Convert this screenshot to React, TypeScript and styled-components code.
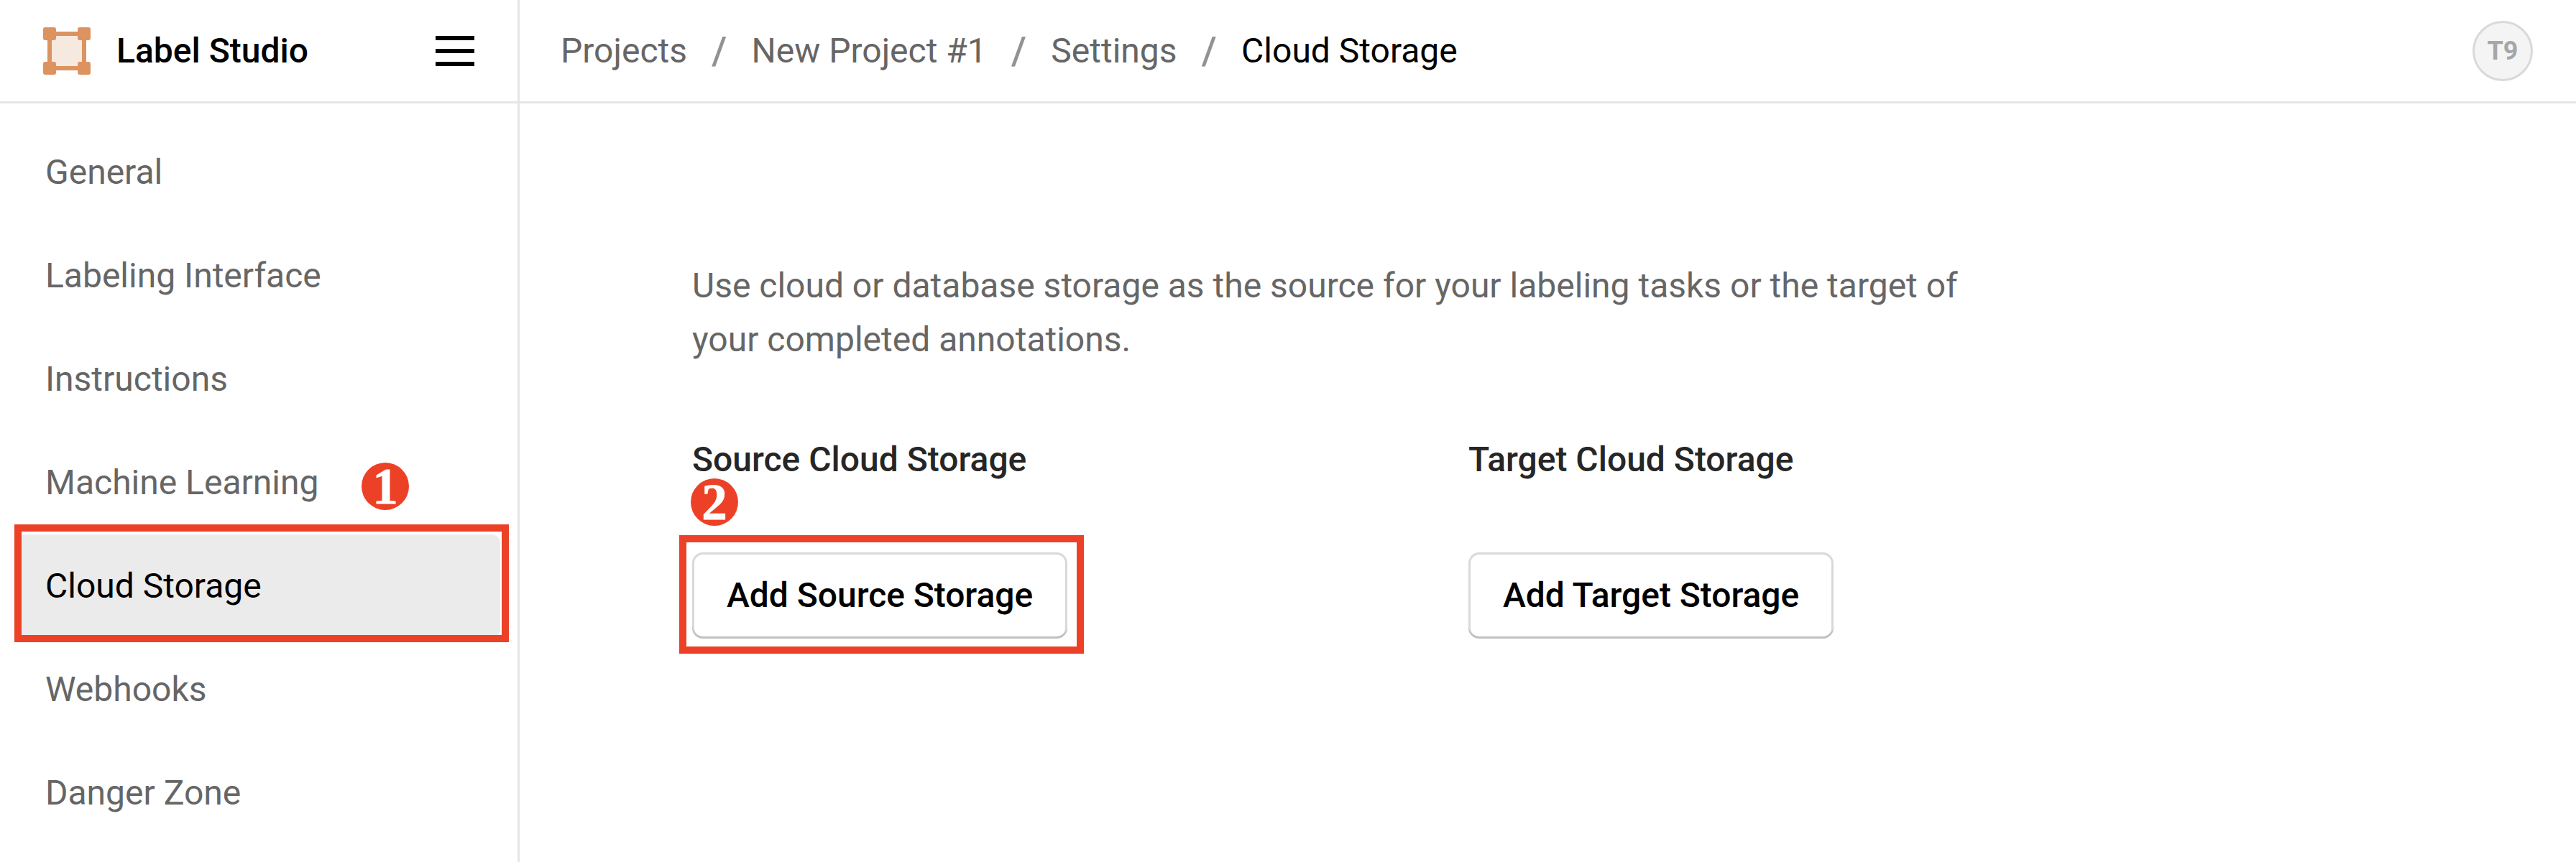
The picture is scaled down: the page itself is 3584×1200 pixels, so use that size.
import React, { Fragment } from "react";
import styled, { createGlobalStyle } from "styled-components";

const GlobalStyle = createGlobalStyle`
  * { box-sizing: border-box; }
  body { margin: 0; background: #fff; }
`;

const Page = styled.div`
  display: flex;
  flex-direction: column;
  width: 3584px;
  height: 1200px;
  overflow: hidden;
  font-family: Roboto, "Liberation Sans", sans-serif;
  font-size: 48px;
  color: #666;
  background: #fff;
`;

const Header = styled.header`
  display: flex;
  flex: none;
  height: 144px;
  border-bottom: 3px solid #e5e5e5;
`;

const Brand = styled.div`
  display: flex;
  align-items: center;
  width: 723px;
  padding: 0 60px;
  border-right: 3px solid #e5e5e5;
`;

const BrandName = styled.span`
  margin-left: 36px;
  font-weight: 500;
  line-height: 60px;
  color: #000;
`;

const MenuButton = styled.button`
  display: flex;
  flex-direction: column;
  gap: 12px;
  width: 54px;
  margin-left: auto;
  padding: 0;
  border: 0;
  background: none;
`;

const MenuLine = styled.span`
  height: 6px;
  background: #000;
`;

const Crumbs = styled.nav`
  display: flex;
  flex: 1;
  align-items: center;
  padding-left: 57px;
`;

const Crumb = styled.span<{ $current?: boolean }>`
  color: ${(p) => (p.$current ? "#000" : "#666")};
  white-space: nowrap;
`;

const Separator = styled.span`
  width: 89.5px;
  font-size: 54px;
  font-weight: 500;
  text-align: center;
  color: #929292;
`;

const Avatar = styled.div`
  display: flex;
  align-items: center;
  justify-content: center;
  align-self: center;
  width: 84px;
  height: 84px;
  margin-right: 60px;
  border: 3px solid #d9d9d9;
  border-radius: 50%;
  background: #f4f4f4;
  font-size: 36px;
  font-weight: 700;
  color: #a6a6a6;
`;

const Body = styled.div`
  display: flex;
  flex: 1;
`;

const Sidebar = styled.aside`
  display: flex;
  flex-direction: column;
  width: 723px;
  padding: 24px;
  border-right: 3px solid #e5e5e5;
`;

const MenuItem = styled.a<{ $active?: boolean }>`
  position: relative;
  display: flex;
  flex: none;
  align-items: center;
  height: 144px;
  padding: 0 39px 2px;
  border-radius: 12px;
  color: ${(p) => (p.$active ? "#000" : "#666")};
  background: ${(p) => (p.$active ? "#ebebeb" : "transparent")};
`;

const Main = styled.main`
  flex: 1;
  padding: 216px 240px 0;
`;

const Description = styled.p`
  width: 1800px;
  margin: 0;
  line-height: 75px;
`;

const Columns = styled.div`
  display: grid;
  grid-template-columns: 1080px 1080px;
  margin-top: 94px;
`;

const Column = styled.section`
  display: flex;
  flex-direction: column;
  align-items: flex-start;
`;

const ColumnTitle = styled.h3`
  position: relative;
  margin: 0 0 93px;
  font-size: 48px;
  font-weight: 500;
  line-height: 72px;
  color: #262626;
`;

const Button = styled.button`
  position: relative;
  height: 120px;
  padding: 0 48px 2px;
  border: 0;
  border-radius: 15px;
  background: #fff;
  box-shadow: inset 0 -3px 0 #c0c0c0, inset 0 0 0 3px #d9d9d9;
  font: inherit;
  font-weight: 500;
  letter-spacing: -0.03px;
  color: #000;
`;

const Frame = styled.span<{ $top: number; $left: number; $width: number; $height: number }>`
  position: absolute;
  top: ${(p) => p.$top}px;
  left: ${(p) => p.$left}px;
  width: ${(p) => p.$width}px;
  height: ${(p) => p.$height}px;
  border: 10px solid #ec4126;
`;

const Marker = styled.span<{ $top: number; $left: number }>`
  position: absolute;
  top: ${(p) => p.$top}px;
  left: ${(p) => p.$left}px;
  width: 66px;
  height: 66px;
  border-radius: 50%;
  background: #ec4126;
  color: #fff;
  font: 700 71px/66px "Liberation Serif", serif;
  -webkit-text-stroke: 0.8px #fff;
  text-align: center;
`;

const Logo = () => (
  <svg width="66" height="66" viewBox="0 0 66 66">
    <rect x="9" y="9" width="48" height="48" fill="#f6e9df" stroke="#dd9360" strokeWidth="6" />
    {[0, 48].map((x) =>
      [0, 48].map((y) => <rect key={`${x}-${y}`} x={x} y={y} width="18" height="18" rx="3" fill="#dd9360" />)
    )}
  </svg>
);

const items = [
  "General",
  "Labeling Interface",
  "Instructions",
  "Machine Learning",
  "Cloud Storage",
  "Webhooks",
  "Danger Zone",
];

const crumbs = ["Projects", "New Project #1", "Settings", "Cloud Storage"];

export default function App() {
  return (
    <Page>
      <GlobalStyle />
      <Header>
        <Brand>
          <Logo />
          <BrandName>Label Studio</BrandName>
          <MenuButton aria-label="Menu">
            <MenuLine />
            <MenuLine />
            <MenuLine />
          </MenuButton>
        </Brand>
        <Crumbs>
          {crumbs.map((crumb, i) => (
            <Fragment key={crumb}>
              {i > 0 && <Separator>/</Separator>}
              <Crumb $current={i === crumbs.length - 1}>{crumb}</Crumb>
            </Fragment>
          ))}
        </Crumbs>
        <Avatar>T9</Avatar>
      </Header>
      <Body>
        <Sidebar>
          {items.map((item) => (
            <MenuItem key={item} $active={item === "Cloud Storage"}>
              {item}
              {item === "Machine Learning" && <Marker $top={44} $left={479}>1</Marker>}
              {item === "Cloud Storage" && <Frame $top={-14} $left={-4} $width={688} $height={164} />}
            </MenuItem>
          ))}
        </Sidebar>
        <Main>
          <Description>
            Use cloud or database storage as the source for your labeling tasks or the target of your completed
            annotations.
          </Description>
          <Columns>
            <Column>
              <ColumnTitle>
                Source Cloud Storage
                <Marker $top={62} $left={-2}>2</Marker>
              </ColumnTitle>
              <Button>
                Add Source Storage
                <Frame $top={-24} $left={-18} $width={563} $height={165} />
              </Button>
            </Column>
            <Column>
              <ColumnTitle>Target Cloud Storage</ColumnTitle>
              <Button>Add Target Storage</Button>
            </Column>
          </Columns>
        </Main>
      </Body>
    </Page>
  );
}
